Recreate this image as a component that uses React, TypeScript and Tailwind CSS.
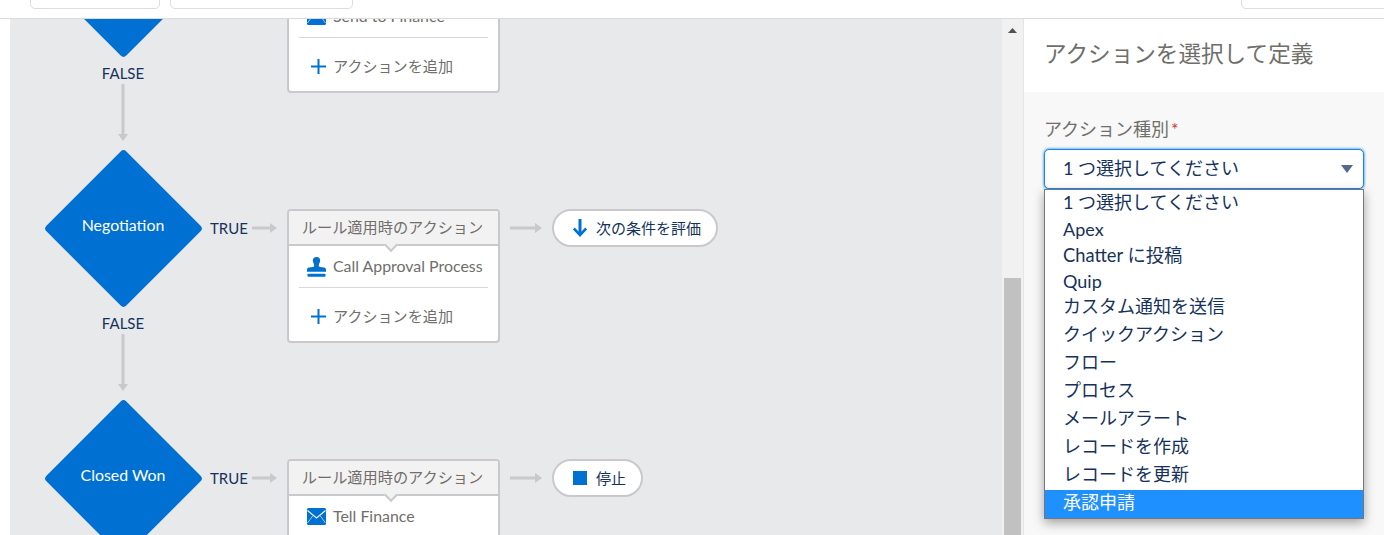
const CJK = "font-['Lato','Noto_Sans_CJK_JP',sans-serif]";

function ArrowRight({ width }: { width: number }) {
  return (
    <svg width={width} height="10" viewBox={`0 0 ${width} 10`} className="shrink-0">
      <rect x="0" y="3.5" width={width - 6} height="3" fill="#c9c9cb" />
      <path d={`M${width - 7} 0 L${width} 5 L${width - 7} 10 Z`} fill="#c9c9cb" />
    </svg>
  );
}

function ArrowDown() {
  return (
    <svg width="10" height="57" viewBox="0 0 10 57" className="mt-[2px]">
      <rect x="3.5" y="0" width="3" height="51" fill="#c9c9cb" />
      <path d="M0 50 L10 50 L5 57 Z" fill="#c9c9cb" />
    </svg>
  );
}

function MailIcon() {
  return (
    <svg width="19" height="17" viewBox="0 0 19 17" className="shrink-0">
      <rect x="0" y="0" width="19" height="17" rx="1.5" fill="#0070d2" />
      <path d="M0.5 2.5 L9.5 10 L18.5 2.5" fill="none" stroke="#fff" strokeWidth="1.2" opacity="0.9" />
      <path d="M0.5 15 L6 7.5 M18.5 15 L13 7.5" fill="none" stroke="#fff" strokeWidth="1" opacity="0.6" />
    </svg>
  );
}

function StampIcon() {
  return (
    <svg width="19" height="20" viewBox="0 0 19 20" className="shrink-0">
      <path d="M9.5 0 C12 0 13.2 1.8 13.2 3.6 C13.2 5.6 11.8 6.8 11.8 8.6 C11.8 9.6 12.2 10 13.2 10 L17 10.4 C18.2 10.6 19 11.4 19 12.6 L19 14.8 L0 14.8 L0 12.6 C0 11.4 0.8 10.6 2 10.4 L5.8 10 C6.8 10 7.2 9.6 7.2 8.6 C7.2 6.8 5.8 5.6 5.8 3.6 C5.8 1.8 7 0 9.5 0 Z" fill="#0070d2" />
      <rect x="0.5" y="16.8" width="18" height="3" rx="0.8" fill="#0070d2" />
    </svg>
  );
}

function PlusIcon() {
  return (
    <svg width="15" height="15" viewBox="0 0 15 15" className="shrink-0">
      <rect x="6.5" y="0" width="2" height="15" fill="#0070d2" />
      <rect x="0" y="6.5" width="15" height="2" fill="#0070d2" />
    </svg>
  );
}

function NextIcon() {
  return (
    <svg width="14" height="18" viewBox="0 0 14 18" className="shrink-0">
      <rect x="5.5" y="0" width="3" height="16" fill="#0070d2" />
      <path d="M0.8 9.5 L7 16 L13.2 9.5" fill="none" stroke="#0070d2" strokeWidth="2.6" />
    </svg>
  );
}

function StopIcon() {
  return <span className="block h-[14px] w-[14px] shrink-0 bg-[#0070d2]" />;
}

type RowData = {
  name: string;
  icon: React.ReactNode;
  action: string;
  pillIcon: React.ReactNode;
  pill: string;
  offscreenTop: boolean;
};

const rows: RowData[] = [
  { name: "", icon: <MailIcon />, action: "Send to Finance", pillIcon: <NextIcon />, pill: "", offscreenTop: true },
  { name: "Negotiation", icon: <StampIcon />, action: "Call Approval Process", pillIcon: <NextIcon />, pill: "次の条件を評価", offscreenTop: false },
  { name: "Closed Won", icon: <MailIcon />, action: "Tell Finance", pillIcon: <StopIcon />, pill: "停止", offscreenTop: false },
];

function Row({ row }: { row: RowData }) {
  return (
    <div className="flex h-[250px] shrink-0 items-start pl-[34px]">
      <div className="flex w-[158px] shrink-0 flex-col items-center">
        <div className="relative flex h-[158px] w-[158px] items-center justify-center">
          <div className="mb-[1px] h-[113px] w-[113px] shrink-0 rotate-45 rounded-[4px] bg-[#0070d2]" />
          <span className="absolute mb-[9px] text-[15.9px] leading-[18px] text-white">{row.name}</span>
        </div>
        <span className="mt-[6px] text-[15px] leading-[18px] text-[#16325c]">FALSE</span>
        <ArrowDown />
      </div>
      <div className="flex items-start pt-[59px]">
        <div className="flex h-[38px] w-[85px] shrink-0 items-center pl-[8px]">
          <span className="w-[42px] pt-[1px] text-[15px] text-[#16325c]">{row.offscreenTop ? "" : "TRUE"}</span>
          <ArrowRight width={25} />
        </div>
        <div className="flex h-[134px] w-[213px] shrink-0 flex-col overflow-hidden rounded-[4px] border-2 border-[#c9c9cd] bg-white">
          <div className="relative flex h-[35px] shrink-0 items-center justify-center border-b-2 border-[#c9c9cd] bg-[#f3f2f2] pr-[2px] text-[15.2px] text-[#706e6b]">
            {row.offscreenTop ? "" : "ルール適用時のアクション"}
            <span className="absolute bottom-[-6px] left-[97px] h-[10px] w-[10px] rotate-45 border-r-2 border-b-2 border-[#c9c9cd] bg-[#f3f2f2]" />
          </div>
          <div className="flex h-[41px] shrink-0 items-center gap-[7px] pl-[18px] text-[15.9px] text-[#706e6b]">
            {row.icon}
            <span className="pb-[2px] whitespace-nowrap">{row.action}</span>
          </div>
          <div className="mx-[10px] h-px shrink-0 bg-[#d8d8d8]" />
          <div className="flex flex-1 items-center gap-[7px] pt-[3px] pl-[22px] text-[15.1px] text-[#706e6b]">
            <PlusIcon />
            <span>アクションを追加</span>
          </div>
        </div>
        <div className="flex h-[38px] w-[52px] shrink-0 items-center pl-[10px]">
          <ArrowRight width={32} />
        </div>
        {row.pill && (
          <div className="flex h-[38px] shrink-0 items-center gap-[9px] rounded-full border-2 border-[#c9c9cd] bg-white pr-[15px] pl-[19px] text-[15px] whitespace-nowrap text-[#16325c]">
            {row.pillIcon}
            <span>{row.pill}</span>
          </div>
        )}
      </div>
    </div>
  );
}

const options = [
  { label: "1 つ選択してください", cls: "h-[26px] pb-[2px]" },
  { label: "Apex", cls: "h-[27px]" },
  { label: "Chatter に投稿", cls: "h-[25px] text-[18.3px]" },
  { label: "Quip", cls: "h-[26px]" },
  { label: "カスタム通知を送信", cls: "h-[28px] pb-[4px]" },
  { label: "クイックアクション", cls: "h-[28px] pb-[4px]" },
  { label: "フロー", cls: "h-[28px] pb-[4px]" },
  { label: "プロセス", cls: "h-[28px] pb-[4px]" },
  { label: "メールアラート", cls: "h-[28px] pb-[4px]" },
  { label: "レコードを作成", cls: "h-[28px] pb-[4px]" },
  { label: "レコードを更新", cls: "h-[28px] pb-[4px]" },
  { label: "承認申請", cls: "h-[28px] pb-[4px] bg-[#1e90ff] text-white" },
];

export default function App() {
  return (
    <div className={`flex h-[535px] w-[1384px] flex-col overflow-hidden bg-white ${CJK}`}>
      <div className="relative h-[19px] shrink-0 border-b border-[#dddbda] bg-white">
        <div className="flex items-start">
          <div className="mt-[-10px] ml-[30px] h-[19px] w-[130px] shrink-0 rounded-[5px] border border-[#d8dde6] bg-white" />
          <div className="mt-[-10px] ml-[10px] h-[19px] w-[183px] shrink-0 rounded-[5px] border border-[#d8dde6] bg-white" />
          <div className="mt-[-10px] ml-[888px] h-[19px] w-[160px] shrink-0 rounded-[5px] border border-[#d8dde6] bg-white" />
        </div>
      </div>
      <div className="flex min-h-0 flex-1">
        <div className="w-[10px] shrink-0 bg-white" />
        <div className="flex w-[992px] shrink-0 flex-col overflow-hidden bg-[#e8e9eb]">
          <div className="mt-[-119px] flex flex-col">
            {rows.map((row) => (
              <Row key={row.action} row={row} />
            ))}
          </div>
        </div>
        <div className="flex w-[21px] shrink-0 flex-col items-center bg-[#f1f1f1]">
          <svg width="9" height="5" viewBox="0 0 9 5" className="mt-[9px]">
            <path d="M0 5 L4.5 0 L9 5 Z" fill="#505050" />
          </svg>
          <div className="mt-[245px] h-[257px] w-[17px] bg-[#c1c1c1]" />
        </div>
        <div className="relative flex min-w-0 flex-1 flex-col border-l border-[#e5e5e5] bg-[#f8f8f8]">
          <div className="flex h-[73px] shrink-0 items-center bg-white pb-[4px] pl-[20px] text-[22.6px] text-[#706e6b]">
            アクションを選択して定義
          </div>
          <div className="flex flex-col px-[20px] pt-[25px]">
            <div className="flex h-[26px] items-center pb-[2px] text-[18px] text-[#706e6b]">
              アクション種別<span className="ml-[2px] text-[#c23934]">*</span>
            </div>
            <div className="mt-[6px] flex h-[40px] w-[320px] items-center justify-between rounded-[5px] border border-[#1589ee] bg-white pr-[10px] pl-[18px] text-[18px] text-[#16325c] shadow-[0_0_3px_#0070d2]">
              <span className="pb-[2px]">1 つ選択してください</span>
              <svg width="12" height="8" viewBox="0 0 12 8">
                <path d="M0 0 L12 0 L6 8 Z" fill="#54698d" />
              </svg>
            </div>
          </div>
          <div className="absolute top-[170px] left-[20px] flex w-[320px] flex-col border border-[#767676] bg-white text-[18px] text-[#16325c] shadow-[0_4px_10px_rgba(0,0,0,0.35)]">
            {options.map((option) => (
              <div key={option.label} className={`flex items-center pl-[18px] ${option.cls}`}>
                {option.label}
              </div>
            ))}
          </div>
        </div>
      </div>
    </div>
  );
}
